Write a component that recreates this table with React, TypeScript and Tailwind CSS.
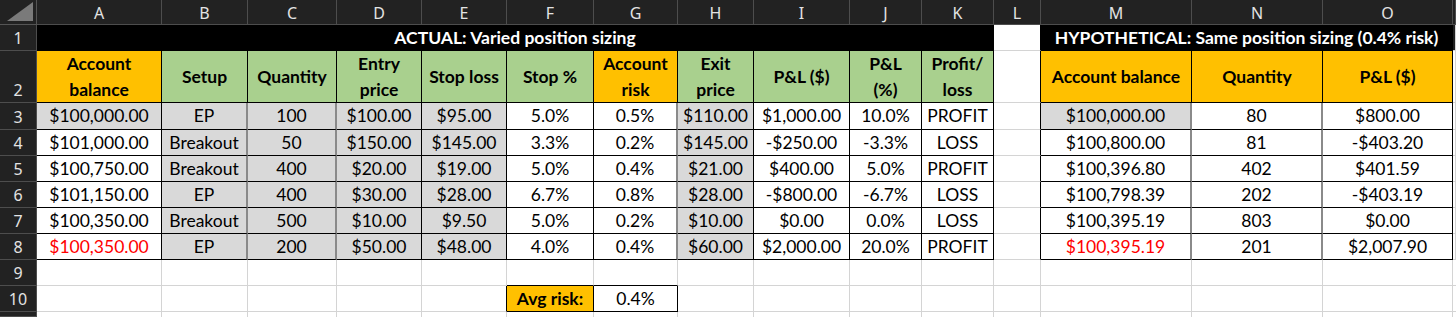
import React from 'react';

type Cell = {
  t?: React.ReactNode;
  bg?: string;
  b?: boolean;
  red?: boolean;
  span?: number;
  r?: string; // right border
  d?: string; // bottom border
};

const LETTERS = ['A', 'B', 'C', 'D', 'E', 'F', 'G', 'H', 'I', 'J', 'K', 'L', 'M', 'N', 'O', ''];

const GRAY = 'bg-[#d9d9d9]';
const GOLD = 'bg-[#ffc000]';
const GREEN = 'bg-[#a9d08e]';

const BLK_R = 'border-r border-r-black';
const BLK_D = 'border-b border-b-black';
const GRID_R = 'border-r border-r-[#d4d4d4]';
const GRID_D = 'border-b border-b-[#d4d4d4]';
const THICK_R = 'border-r-2 border-r-[#8a8a8a]';

// grey fill pattern for columns A..K in the data rows
const ACTUAL_FILL = [false, true, true, true, true, false, false, true, false, false, false];

const actual = [
  ['$100,000.00', 'EP', '100', '$100.00', '$95.00', '5.0%', '0.5%', '$110.00', '$1,000.00', '10.0%', 'PROFIT'],
  ['$101,000.00', 'Breakout', '50', '$150.00', '$145.00', '3.3%', '0.2%', '$145.00', '-$250.00', '-3.3%', 'LOSS'],
  ['$100,750.00', 'Breakout', '400', '$20.00', '$19.00', '5.0%', '0.4%', '$21.00', '$400.00', '5.0%', 'PROFIT'],
  ['$101,150.00', 'EP', '400', '$30.00', '$28.00', '6.7%', '0.8%', '$28.00', '-$800.00', '-6.7%', 'LOSS'],
  ['$100,350.00', 'Breakout', '500', '$10.00', '$9.50', '5.0%', '0.2%', '$10.00', '$0.00', '0.0%', 'LOSS'],
  ['$100,350.00', 'EP', '200', '$50.00', '$48.00', '4.0%', '0.4%', '$60.00', '$2,000.00', '20.0%', 'PROFIT'],
];

const hypo = [
  ['$100,000.00', '80', '$800.00'],
  ['$100,800.00', '81', '-$403.20'],
  ['$100,396.80', '402', '$401.59'],
  ['$100,798.39', '202', '-$403.19'],
  ['$100,395.19', '803', '$0.00'],
  ['$100,395.19', '201', '$2,007.90'],
];

// right border for each of the bordered columns A..K, M..O
const actualRight = (i: number) => (i === 1 || i === 2 || i === 6 ? THICK_R : BLK_R);
const hypoRight = (i: number) => (i < 2 ? THICK_R : BLK_R);

function buildRows(): Cell[][] {
  const rows: Cell[][] = [];

  // row 1 - titles
  rows.push([
    { t: 'ACTUAL: Varied position sizing', bg: 'bg-black text-white', b: true, span: 11, r: BLK_R, d: BLK_D },
    { r: BLK_R, d: GRID_D },
    { t: 'HYPOTHETICAL: Same position sizing (0.4% risk)', bg: 'bg-black text-white', b: true, span: 3, r: BLK_R, d: BLK_D },
    { bg: 'bg-[#1f1f1f]', d: GRID_D },
  ]);

  // row 2 - headings
  const heads: [React.ReactNode, string][] = [
    [<>Account<br />balance</>, GOLD],
    ['Setup', GREEN],
    ['Quantity', GREEN],
    [<>Entry<br />price</>, GREEN],
    ['Stop loss', GREEN],
    ['Stop %', GREEN],
    [<>Account<br />risk</>, GOLD],
    [<>Exit<br />price</>, GREEN],
    ['P&L ($)', GREEN],
    [<>P&amp;L<br />(%)</>, GREEN],
    [<>Profit/<br />loss</>, GREEN],
  ];
  const r2: Cell[] = heads.map(([t, bg]) => ({ t, bg, b: true, r: BLK_R, d: BLK_D }));
  r2.push({ r: BLK_R, d: GRID_D });
  r2.push({ t: 'Account balance', bg: GOLD, b: true, r: BLK_R, d: BLK_D });
  r2.push({ t: 'Quantity', bg: GOLD, b: true, r: BLK_R, d: BLK_D });
  r2.push({ t: 'P&L ($)', bg: GOLD, b: true, r: BLK_R, d: BLK_D });
  r2.push({ d: GRID_D });
  rows.push(r2);

  // rows 3-8 - data
  actual.forEach((vals, ri) => {
    const last = ri === actual.length - 1;
    const row: Cell[] = vals.map((t, i) => ({
      t,
      bg: i === 0 ? (ri === 0 ? GRAY : 'bg-white') : ACTUAL_FILL[i] ? GRAY : 'bg-white',
      red: i === 0 && last,
      r: actualRight(i),
      d: BLK_D,
    }));
    row.push({ r: BLK_R, d: GRID_D });
    hypo[ri].forEach((t, i) => {
      row.push({
        t,
        bg: i === 0 && ri === 0 ? GRAY : 'bg-white',
        red: i === 0 && last,
        r: hypoRight(i),
        d: BLK_D,
      });
    });
    row.push({ d: GRID_D });
    rows.push(row);
  });

  // rows 9-10
  for (let k = 0; k < 2; k++) {
    const row: Cell[] = [];
    for (let i = 0; i < 16; i++) {
      const c: Cell = { r: i === 15 ? '' : GRID_R, d: GRID_D };
      if (k === 0 && (i === 5 || i === 6)) c.d = BLK_D;
      if (k === 1) {
        if (i === 4 || i === 5 || i === 6) c.r = BLK_R;
        if (i === 5) Object.assign(c, { t: 'Avg risk:', bg: GOLD, b: true, d: BLK_D });
        if (i === 6) Object.assign(c, { t: '0.4%', d: BLK_D });
      }
      row.push(c);
    }
    rows.push(row);
  }

  // partial row 11
  rows.push(Array.from({ length: 16 }, (_, i) => ({ r: i === 15 ? '' : GRID_R })));
  return rows;
}

const spanClass: Record<number, string> = { 1: '', 3: 'col-span-3', 11: 'col-span-11' };

export default function App() {
  const rows = buildRows();

  return (
    <div className="w-[1456px] h-[317px] overflow-hidden bg-white font-['Lato',sans-serif] text-[17.5px] text-black">
      <div className="grid grid-cols-[37px_125px_86px_89px_85px_85px_87px_84px_76px_96px_72px_72px_47px_151px_131px_130px_3px] grid-rows-[25px_26px_52px_27px_26px_26px_26px_26px_26px_26px_26px_5px]">
        {/* corner */}
        <div className="relative bg-[#222222] border-r border-b border-[#555555]">
          <div className="absolute right-[3px] bottom-[3px] w-0 h-0 border-l-[26px] border-l-transparent border-b-[19px] border-b-[#7a7a7a]" />
        </div>
        {LETTERS.map((l, i) => (
          <div
            key={'h' + i}
            className="flex items-center justify-center bg-[#222222] border-r border-b border-[#4d4d4d] font-['Noto_Sans',sans-serif] text-[16px] text-[#e3e3e3] leading-none pt-[1px]"
          >
            {l}
          </div>
        ))}

        {rows.map((row, ri) => (
          <React.Fragment key={ri}>
            <div className="flex items-end justify-center pb-[2px] bg-[#222222] border-r border-b border-[#4d4d4d] font-['Noto_Sans',sans-serif] text-[16px] text-[#e3e3e3] leading-[20px]">
              {ri < 10 ? ri + 1 : ''}
            </div>
            {row.map((c, ci) => (
              <div
                key={ci}
                className={`flex items-center justify-center text-center whitespace-nowrap leading-[26px] ${spanClass[c.span ?? 1]} ${c.bg ?? 'bg-white'} ${c.r ?? GRID_R} ${c.d ?? ''} ${c.b ? 'font-bold' : ''} ${c.red ? 'text-[#ff0000]' : ''}`}
              >
                <span>{c.t}</span>
              </div>
            ))}
          </React.Fragment>
        ))}
      </div>
    </div>
  );
}
